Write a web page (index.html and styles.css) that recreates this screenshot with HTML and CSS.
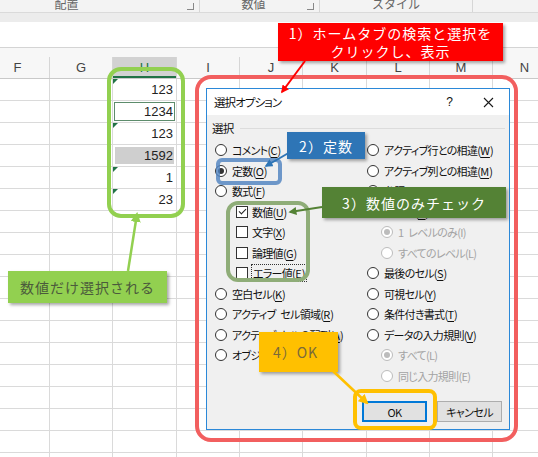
FILE: index.html
```html
<!DOCTYPE html>
<html lang="ja">
<head>
    <meta charset="UTF-8">
    <title>選択オプション</title>
    <link rel="stylesheet" href="styles.css">
</head>
<body>
    <div class="ribbon">
        <div class="ribbon-group group-align"><span class="group-label">配置</span><span class="launcher"></span></div>
        <div class="ribbon-group group-number"><span class="group-label">数値</span><span class="launcher"></span></div>
        <div class="ribbon-group group-style"><span class="group-label">スタイル</span></div>
        <div class="ribbon-group group-rest"></div>
    </div>
    <div class="ribbon-foot"></div>
    <div class="formula-bar"></div>
    <div class="head-gap"></div>
    <div class="col-heads">
        <div class="col-head">F</div>
        <div class="col-head">G</div>
        <div class="col-head current">H</div>
        <div class="col-head">I</div>
        <div class="col-head">J</div>
        <div class="col-head">K</div>
        <div class="col-head">L</div>
        <div class="col-head">M</div>
        <div class="col-head">N</div>
    </div>
    <div class="grid" id="grid"></div>

    <div class="ring ring-lime"></div>
    <div class="ring ring-red"></div>

    <div class="dialog">
        <div class="dialog-title">
            <span class="dialog-name">選択オプション</span>
            <span class="title-help">?</span>
            <svg class="title-close" width="11" height="11" viewBox="0 0 11 11"><path d="M1 1L10 10M10 1L1 10" stroke="#1a1a1a" stroke-width="1.1"/></svg>
        </div>
        <div class="dialog-body">
            <div class="group-head"><span>選択</span><span class="group-rule"></span></div>
            <div class="options">
                <div class="option-col">
                    <div class="opt"><span class="radio"></span>コメント(<u>C</u>)</div>
                    <div class="opt"><span class="radio on"></span>定数(<u>O</u>)</div>
                    <div class="opt"><span class="radio"></span>数式(<u>F</u>)</div>
                    <div class="opt sub"><span class="check on"></span>数値(<u>U</u>)</div>
                    <div class="opt sub"><span class="check"></span>文字(<u>X</u>)</div>
                    <div class="opt sub"><span class="check"></span>論理値(<u>G</u>)</div>
                    <div class="opt sub"><span class="check"></span><span class="focus">エラー値(<u>E</u>)</span></div>
                    <div class="opt"><span class="radio"></span>空白セル(<u>K</u>)</div>
                    <div class="opt"><span class="radio"></span>アクティブ セル領域(<u>R</u>)</div>
                    <div class="opt"><span class="radio"></span>アクティブ セルの配列(<u>A</u>)</div>
                    <div class="opt"><span class="radio"></span>オブジェクト(<u>B</u>)</div>
                </div>
                <div class="option-col">
                    <div class="opt"><span class="radio"></span>アクティブ行との相違(<u>W</u>)</div>
                    <div class="opt"><span class="radio"></span>アクティブ列との相違(<u>M</u>)</div>
                    <div class="opt"><span class="radio"></span>参照元(<u>P</u>)</div>
                    <div class="opt"><span class="radio"></span>参照先(<u>D</u>)</div>
                    <div class="opt sub off"><span class="radio on"></span>1 レベルのみ(I)</div>
                    <div class="opt sub off"><span class="radio"></span>すべてのレベル(L)</div>
                    <div class="opt"><span class="radio"></span>最後のセル(<u>S</u>)</div>
                    <div class="opt"><span class="radio"></span>可視セル(<u>Y</u>)</div>
                    <div class="opt"><span class="radio"></span>条件付き書式(<u>T</u>)</div>
                    <div class="opt"><span class="radio"></span>データの入力規則(<u>V</u>)</div>
                    <div class="opt sub off"><span class="radio on"></span>すべて(L)</div>
                    <div class="opt sub off"><span class="radio"></span>同じ入力規則(E)</div>
                </div>
            </div>
            <div class="dialog-buttons">
                <button class="btn btn-default">OK</button>
                <button class="btn">キャンセル</button>
            </div>
        </div>
    </div>

    <div class="ring ring-blue"></div>
    <div class="ring ring-olive"></div>
    <div class="ring ring-yellow"></div>

    <div class="callout callout-red">1）ホームタブの検索と選択を<br>クリックし、表示</div>
    <div class="callout callout-blue">2）定数</div>
    <div class="callout callout-olive">3）数値のみチェック</div>
    <div class="callout callout-yellow">4）OK</div>
    <div class="callout callout-lime">数値だけ選択される</div>

    <svg class="arrows" width="538" height="457" viewBox="0 0 538 457">
        <defs>
            <marker id="head-red" viewBox="0 0 10 10" refX="8" refY="5" markerWidth="4" markerHeight="4" orient="auto"><path d="M0 0L10 5L0 10z" fill="#ff0000"/></marker>
            <marker id="head-lime" viewBox="0 0 10 10" refX="8" refY="5" markerWidth="4" markerHeight="4" orient="auto"><path d="M0 0L10 5L0 10z" fill="#92d050"/></marker>
            <marker id="head-blue" viewBox="0 0 10 10" refX="8" refY="5" markerWidth="4" markerHeight="4" orient="auto"><path d="M0 0L10 5L0 10z" fill="#2e75b6"/></marker>
            <marker id="head-olive" viewBox="0 0 10 10" refX="8" refY="5" markerWidth="4" markerHeight="4" orient="auto"><path d="M0 0L10 5L0 10z" fill="#548235"/></marker>
            <marker id="head-yellow" viewBox="0 0 10 10" refX="8" refY="5" markerWidth="4" markerHeight="4" orient="auto"><path d="M0 0L10 5L0 10z" fill="#ffc000"/></marker>
        </defs>
        <line x1="305" y1="61" x2="282" y2="92" stroke="#ff0000" stroke-width="2" marker-end="url(#head-red)"/>
        <line x1="128" y1="271" x2="137" y2="214" stroke="#92d050" stroke-width="2.5" marker-end="url(#head-lime)"/>
        <line x1="292" y1="151" x2="266" y2="166" stroke="#2e75b6" stroke-width="2" marker-end="url(#head-blue)"/>
        <line x1="322" y1="207" x2="290" y2="212" stroke="#548235" stroke-width="2" marker-end="url(#head-olive)"/>
        <line x1="333" y1="371" x2="367" y2="403" stroke="#ffc000" stroke-width="2.5" marker-end="url(#head-yellow)"/>
    </svg>

    <script>
        // values in column H (rows 1-6)
        const hCells = [
            { v: '123', flag: true },
            { v: '1234', active: true },
            { v: '123', flag: true },
            { v: '1592', picked: true },
            { v: '1', flag: true },
            { v: '23', flag: true }
        ];

        const grid = document.getElementById('grid');

        for (let r = 0; r < 18; r++) {
            for (let c = 0; c < 9; c++) {
                const cell = document.createElement('div');
                cell.className = 'cell';
                if (c === 2 && hCells[r]) {
                    const d = hCells[r];
                    cell.textContent = d.v;
                    cell.classList.add('num');
                    if (d.flag) cell.classList.add('flag');
                    if (d.active) cell.classList.add('active');
                    if (d.picked) cell.classList.add('picked');
                }
                grid.appendChild(cell);
            }
        }
    </script>
</body>
</html>
```

FILE: styles.css
```css
body {
    margin: 0;
    width: 538px;
    height: 457px;
    overflow: hidden;
    position: relative;
    background: #fff;
    font-family: "Noto Sans CJK JP", sans-serif;
}

/* ribbon remains */
.ribbon {
    height: 12px;
    display: flex;
    background: #f3f3f3;
    border-bottom: 1px solid #dadada;
    overflow: hidden;
}
.ribbon-group {
    display: flex;
    align-items: flex-start;
    border-right: 1px solid #d6d6d6;
    box-sizing: border-box;
    flex-shrink: 0;
}
.group-align {
    margin-left: -54px;
    width: 254px;
}
.group-number {
    width: 120px;
}
.group-style {
    width: 153px;
}
.group-rest {
    flex: 1;
    border-right: none;
}
.group-label {
    flex: 1;
    text-align: center;
    font-size: 12px;
    line-height: 12px;
    margin-top: -2px;
    color: #666;
}
.launcher {
    width: 6px;
    height: 6px;
    margin: 3px 5px 0 0;
    border-right: 1px solid #888;
    border-bottom: 1px solid #888;
}
.ribbon-foot {
    height: 9px;
    background: #ececec;
}
.formula-bar {
    height: 25px;
    background: #fff;
    border-bottom: 1px solid #d4d4d4;
}
.head-gap {
    height: 9px;
    background: #f7f7f7;
}

/* sheet */
.col-heads,
.grid {
    display: grid;
    grid-template-columns: 64px 63px 64px 63px 63px 64px 63px 63px 64px;
    margin-left: -14px;
}
.col-heads {
    height: 21px;
    background: #f7f7f7;
    border-bottom: 1px solid #c9c9c9;
}
.col-head {
    border-right: 1px solid #d6d6d6;
    font-family: "Liberation Sans", Arial, sans-serif;
    font-size: 13px;
    line-height: 21px;
    text-align: center;
    color: #444;
}
.col-head.current {
    background: #d2d2d2;
    color: #217346;
    box-shadow: inset 0 -2px #217346;
}
.grid {
    grid-auto-rows: 22px;
}
.cell {
    position: relative;
    border-right: 1px solid #dadada;
    border-bottom: 1px solid #dadada;
    font-family: "Liberation Sans", Arial, sans-serif;
    font-size: 13px;
    line-height: 21px;
    color: #222;
}
.cell.num {
    text-align: right;
    padding-right: 3px;
}
.cell.flag::before {
    content: "";
    position: absolute;
    top: 0;
    left: 0;
    border-top: 5px solid #217346;
    border-right: 5px solid transparent;
}
.cell.active {
    box-shadow: inset 0 0 0 1px #fff, inset 0 0 0 2px #5d8c6c;
}
.cell.picked {
    background: #cfcfcf;
    box-shadow: inset 0 0 0 2px #fff;
}

/* dialog */
.dialog {
    position: absolute;
    left: 206px;
    top: 88px;
    width: 304px;
    height: 342px;
    box-sizing: border-box;
    border: 1px solid #2b88d8;
    background: #f0f0f0;
    display: flex;
    flex-direction: column;
    font-size: 11px;
    letter-spacing: -0.7px;
    word-spacing: 3px;
    font-feature-settings: "palt" 1;
    color: #111;
}
.dialog-title {
    height: 26px;
    background: #fff;
    display: flex;
    align-items: center;
    padding: 0 15px 0 7px;
    font-size: 11.5px;
    letter-spacing: -0.9px;
}
.dialog-name {
    flex: 1;
}
.title-help {
    font-family: "Liberation Sans", Arial, sans-serif;
    font-size: 12px;
    margin-right: 31px;
}
.dialog-body {
    flex: 1;
    display: flex;
    flex-direction: column;
    padding: 3px 4px 7px 5px;
}
.group-head {
    height: 20px;
    display: flex;
    align-items: center;
    font-size: 11.5px;
}
.group-rule {
    flex: 1;
    height: 1px;
    margin-left: 6px;
    background: #dcdcdc;
}
.options {
    display: grid;
    grid-template-columns: 152px 1fr;
    padding-left: 3px;
    margin-top: 2px;
}
.opt {
    height: 20.5px;
    display: flex;
    align-items: center;
    white-space: pre;
}
.opt u {
    letter-spacing: 0;
    text-decoration-thickness: 1px;
    text-underline-offset: 2px;
}
.opt.sub {
    padding-left: 14px;
}
.option-col:first-child .opt.sub {
    padding-left: 21px;
}
.opt.off {
    color: #a3a3a3;
}
.radio {
    width: 12px;
    height: 12px;
    box-sizing: border-box;
    border: 1px solid #333;
    border-radius: 50%;
    background: #fff;
    margin-right: 5px;
    display: flex;
    align-items: center;
    justify-content: center;
    flex-shrink: 0;
}
.radio.on::after {
    content: "";
    width: 6px;
    height: 6px;
    border-radius: 50%;
    background: #333;
}
.opt.off .radio {
    border-color: #bcbcbc;
}
.opt.off .radio.on::after {
    background: #bcbcbc;
}
.check {
    width: 12px;
    height: 12px;
    box-sizing: border-box;
    border: 1px solid #333;
    background: #fff;
    margin-right: 4px;
    flex-shrink: 0;
    display: flex;
    align-items: center;
    justify-content: center;
}
.check.on::after {
    content: "";
    width: 6px;
    height: 3px;
    border-left: 1.3px solid #222;
    border-bottom: 1.3px solid #222;
    transform: rotate(-45deg) translate(1px, -1px);
}
.focus {
    outline: 1px dotted #333;
    padding: 0 1px;
}
.dialog-buttons {
    margin-top: auto;
    display: flex;
    justify-content: flex-end;
    gap: 10px;
    padding-right: 3px;
}
.btn {
    width: 65px;
    height: 21px;
    box-sizing: border-box;
    border: 1px solid #adadad;
    background: #e1e1e1;
    font-family: "Noto Sans CJK JP", sans-serif;
    font-feature-settings: "palt" 1;
    font-size: 11px;
    letter-spacing: -0.6px;
    color: #111;
    padding: 0;
}
.btn-default {
    border: 2px solid #0078d7;
}

/* highlight rings */
.ring {
    position: absolute;
    box-sizing: border-box;
    border: 4px solid;
}
.ring-lime {
    left: 107px;
    top: 67px;
    width: 78px;
    height: 151px;
    border-color: #92d050;
    border-radius: 14px;
}
.ring-red {
    left: 195px;
    top: 75px;
    width: 323px;
    height: 367px;
    border-color: #f25f5f;
    border-radius: 16px;
}
.ring-blue {
    left: 216px;
    top: 158px;
    width: 66px;
    height: 27px;
    border-color: rgba(76, 129, 191, 0.8);
    border-radius: 6px;
}
.ring-olive {
    left: 226px;
    top: 201px;
    width: 84px;
    height: 81px;
    border-color: #8fad78;
    border-radius: 12px;
}
.ring-yellow {
    left: 353px;
    top: 389px;
    width: 84px;
    height: 41px;
    border-color: #ffc000;
    border-radius: 8px;
}

/* callouts */
.callout {
    position: absolute;
    box-sizing: border-box;
    display: flex;
    align-items: center;
    justify-content: center;
    text-align: center;
    font-size: 14px;
    letter-spacing: 1px;
    color: #fff;
    box-shadow: 2px 2px 3px rgba(0, 0, 0, 0.35);
}
.callout-red {
    left: 278px;
    top: 23px;
    width: 225px;
    height: 38px;
    line-height: 18px;
    background: #ff0000;
}
.callout-blue {
    left: 287px;
    top: 132px;
    width: 78px;
    height: 27px;
    background: #2e75b6;
}
.callout-olive {
    left: 322px;
    top: 187px;
    width: 184px;
    height: 31px;
    background: #548235;
}
.callout-yellow {
    left: 259px;
    top: 332px;
    width: 79px;
    height: 40px;
    padding-right: 6px;
    background: #ffc000;
    color: #7a6a3a;
}
.callout-lime {
    left: 8px;
    top: 271px;
    width: 159px;
    height: 32px;
    background: #92d050;
    color: #4b5a3c;
}

.arrows {
    position: absolute;
    left: 0;
    top: 0;
    pointer-events: none;
}
```
